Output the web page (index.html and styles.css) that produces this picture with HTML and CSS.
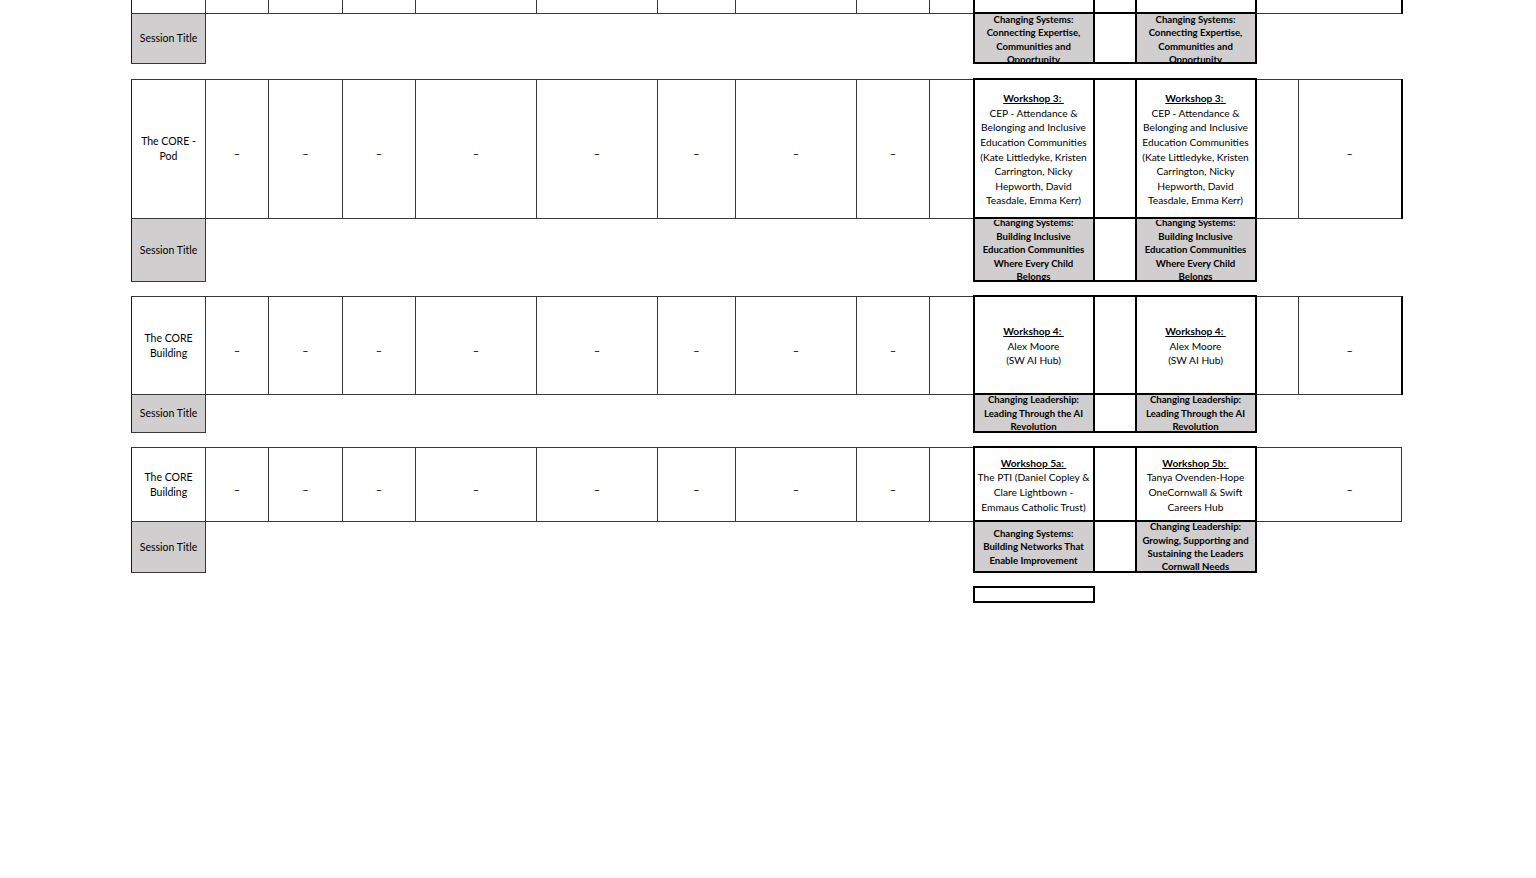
FILE: index.html
```html
<!DOCTYPE html>
<html lang="en">
<head>
<meta charset="utf-8">
<title>Programme grid</title>
<link rel="stylesheet" href="styles.css">
</head>
<body>
<div class="sheet">
<table class="grid">
  <colgroup>
    <col class="w74"><col class="w63"><col class="w74"><col class="w73"><col class="w121"><col class="w121"><col class="w78"><col class="w121"><col class="w73"><col class="w44"><col class="w120"><col class="w42"><col class="w120"><col class="w43"><col class="w103">
  </colgroup>
  <tbody>
    <!-- block 0 (continued from above) -->
    <tr class="r0">
      <td class="cell label notop"></td>
      <td class="cell notop"></td><td class="cell notop"></td><td class="cell notop"></td><td class="cell notop"></td>
      <td class="cell notop"></td><td class="cell notop"></td><td class="cell notop"></td><td class="cell notop"></td>
      <td class="cell notop"></td>
      <td class="cell ws notop"></td>
      <td class="cell mid notop"></td>
      <td class="cell ws notop"></td>
      <td class="cell notop joinright"></td>
      <td class="cell notop endthick"></td>
    </tr>
    <tr class="s0">
      <td class="cell label grey"><div class="txt">Session Title</div></td>
      <td class="blank" colspan="9"></td>
      <td class="cell ws grey"><div class="clip h47">Changing Systems:<br>Connecting Expertise,<br>Communities and<br><u>Opportunity</u></div></td>
      <td class="cell mid"></td>
      <td class="cell ws grey"><div class="clip h47">Changing Systems:<br>Connecting Expertise,<br>Communities and<br><u>Opportunity</u></div></td>
      <td class="blank" colspan="2"></td>
    </tr>
    <tr class="gap g16"><td colspan="15"></td></tr>

    <!-- block 1 -->
    <tr class="r1">
      <td class="cell label"><div class="txt">The CORE -<br>Pod</div></td>
      <td class="cell dash">–</td><td class="cell dash">–</td><td class="cell dash">–</td><td class="cell dash">–</td>
      <td class="cell dash">–</td><td class="cell dash">–</td><td class="cell dash">–</td><td class="cell dash">–</td>
      <td class="cell"></td>
      <td class="cell ws"><div class="txt body"><u class="ttl">Workshop 3:&nbsp;</u><br>CEP - Attendance &amp;<br>Belonging and Inclusive<br>Education Communities<br>(Kate Littledyke, Kristen<br>Carrington, Nicky<br>Hepworth, David<br>Teasdale, Emma Kerr)</div></td>
      <td class="cell mid"></td>
      <td class="cell ws"><div class="txt body"><u class="ttl">Workshop 3:&nbsp;</u><br>CEP - Attendance &amp;<br>Belonging and Inclusive<br>Education Communities<br>(Kate Littledyke, Kristen<br>Carrington, Nicky<br>Hepworth, David<br>Teasdale, Emma Kerr)</div></td>
      <td class="cell"></td>
      <td class="cell dash endthick">–</td>
    </tr>
    <tr class="s1">
      <td class="cell label grey"><div class="txt">Session Title</div></td>
      <td class="blank" colspan="9"></td>
      <td class="cell ws grey"><div class="clip h60">Changing Systems:<br>Building Inclusive<br>Education Communities<br>Where Every Child<br>Belongs</div></td>
      <td class="cell mid"></td>
      <td class="cell ws grey"><div class="clip h60">Changing Systems:<br>Building Inclusive<br>Education Communities<br>Where Every Child<br>Belongs</div></td>
      <td class="blank" colspan="2"></td>
    </tr>
    <tr class="gap g15"><td colspan="15"></td></tr>

    <!-- block 2 -->
    <tr class="r2">
      <td class="cell label"><div class="txt">The CORE<br>Building</div></td>
      <td class="cell dash">–</td><td class="cell dash">–</td><td class="cell dash">–</td><td class="cell dash">–</td>
      <td class="cell dash">–</td><td class="cell dash">–</td><td class="cell dash">–</td><td class="cell dash">–</td>
      <td class="cell"></td>
      <td class="cell ws"><div class="txt body"><u class="ttl">Workshop 4:&nbsp;</u><br>Alex Moore<br>(SW AI Hub)</div></td>
      <td class="cell mid"></td>
      <td class="cell ws"><div class="txt body"><u class="ttl">Workshop 4:&nbsp;</u><br>Alex Moore<br>(SW AI Hub)</div></td>
      <td class="cell"></td>
      <td class="cell dash endthick">–</td>
    </tr>
    <tr class="s2">
      <td class="cell label grey"><div class="txt">Session Title</div></td>
      <td class="blank" colspan="9"></td>
      <td class="cell ws grey"><div class="clip h35">Changing Leadership:<br>Leading Through the AI<br>Revolution</div></td>
      <td class="cell mid"></td>
      <td class="cell ws grey"><div class="clip h35">Changing Leadership:<br>Leading Through the AI<br>Revolution</div></td>
      <td class="blank" colspan="2"></td>
    </tr>
    <tr class="gap g15"><td colspan="15"></td></tr>

    <!-- block 3 -->
    <tr class="r3">
      <td class="cell label"><div class="txt">The CORE<br>Building</div></td>
      <td class="cell dash">–</td><td class="cell dash">–</td><td class="cell dash">–</td><td class="cell dash">–</td>
      <td class="cell dash">–</td><td class="cell dash">–</td><td class="cell dash">–</td><td class="cell dash">–</td>
      <td class="cell"></td>
      <td class="cell ws"><div class="txt body"><u class="ttl">Workshop 5a:&nbsp;</u><br>The PTI (Daniel Copley &amp;<br>Clare Lightbown -<br>Emmaus Catholic Trust)</div></td>
      <td class="cell mid"></td>
      <td class="cell ws"><div class="txt body"><u class="ttl">Workshop 5b:&nbsp;</u><br>Tanya Ovenden-Hope<br>OneCornwall &amp; Swift<br>Careers Hub</div></td>
      <td class="cell joinright"></td>
      <td class="cell dash">–</td>
    </tr>
    <tr class="s3">
      <td class="cell label grey"><div class="txt">Session Title</div></td>
      <td class="blank" colspan="9"></td>
      <td class="cell ws grey"><div class="clip h48">Changing Systems:<br>Building Networks That<br>Enable Improvement</div></td>
      <td class="cell mid"></td>
      <td class="cell ws grey"><div class="clip h48">Changing Leadership:<br>Growing, Supporting and<br>Sustaining the Leaders<br>Cornwall Needs</div></td>
      <td class="blank" colspan="2"></td>
    </tr>
    <tr class="gap g15"><td colspan="15"></td></tr>

    <tr class="r4">
      <td class="blank" colspan="10"></td>
      <td class="cell ws"></td>
      <td class="blank" colspan="4"></td>
    </tr>
  </tbody>
</table>
</div>
</body>
</html>
```

FILE: styles.css
```css
html, body {
  margin: 0;
  padding: 0;
  background: #ffffff;
}

body {
  font-family: Lato, "Open Sans", "Liberation Sans", sans-serif;
  color: #000000;
}

.sheet {
  padding-left: 131px;
}

.grid {
  border-collapse: collapse;
  table-layout: fixed;
  width: 1270px;
}

.w74 { width: 74px; }
.w63 { width: 63px; }
.w73 { width: 73px; }
.w121 { width: 121px; }
.w78 { width: 78px; }
.w44 { width: 44px; }
.w120 { width: 120px; }
.w42 { width: 42px; }
.w43 { width: 43px; }
.w103 { width: 103px; }

td {
  padding: 0;
  text-align: center;
  vertical-align: middle;
}

.cell {
  border: 1px solid #383838;
}

.cell.notop {
  border-top: none;
}

.cell.label {
  border-left-color: #1a1a1a;
}

.cell.ws,
.cell.mid {
  border: 2px solid #000000;
}

.cell.ws.notop,
.cell.mid.notop {
  border-top: none;
}

.cell.endthick {
  border-right: 2px solid #000000;
}

.cell.joinright {
  border-right-style: hidden;
}

.blank {
  border: none;
}

.grey {
  background: #d0cece;
}

.r0 { height: 13px; }
.s0 { height: 50px; }
.g16 { height: 16px; }
.g15 { height: 15px; }
.r1 { height: 139px; }
.s1 { height: 63px; }
.r2 { height: 98px; }
.s2 { height: 38px; }
.r3 { height: 74px; }
.s3 { height: 51px; }
.r4 { height: 15px; }

.gap td {
  border: none;
}

.txt {
  font-size: 10.5px;
  line-height: 14.6px;
  white-space: nowrap;
}

.label .txt {
  line-height: 15px;
  padding-top: 1px;
}

.body {
  font-size: 10.2px;
  padding-top: 2px;
}

.ttl {
  font-weight: 700;
  text-decoration: underline;
  text-underline-offset: 1px;
}

.dash {
  font-size: 11px;
  padding-top: 10px;
}

.clip {
  display: flex;
  flex-direction: column;
  justify-content: center;
  box-sizing: border-box;
  overflow: hidden;
  font-size: 9.6px;
  font-weight: 700;
  line-height: 13.4px;
  white-space: nowrap;
}

.clip u {
  text-decoration: underline;
}

.h47 { height: 47px; padding-top: 3px; }
.h60 { height: 60px; padding-top: 1px; }
.h35 { height: 35px; padding-top: 1px; }
.h48 { height: 48px; padding-top: 1px; }
```
